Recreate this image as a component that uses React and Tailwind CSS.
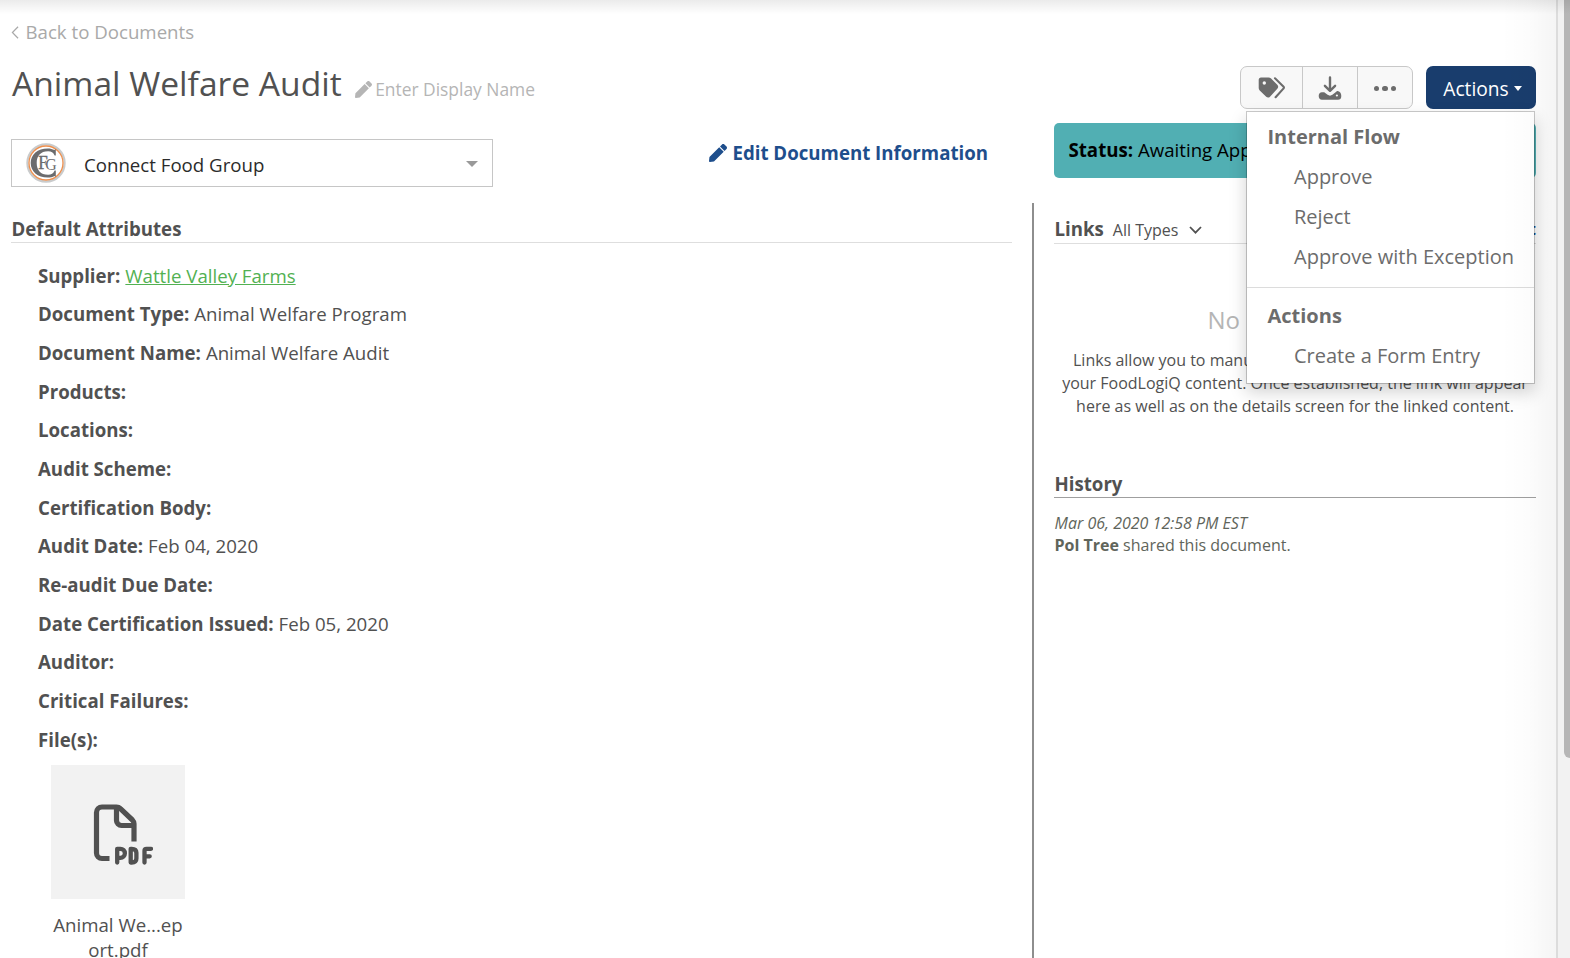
import React from "react";
import { FaPen } from "react-icons/fa";

const attributes = [
  ["Supplier:", "Wattle Valley Farms", true],
  ["Document Type:", "Animal Welfare Program"],
  ["Document Name:", "Animal Welfare Audit"],
  ["Products:"],
  ["Locations:"],
  ["Audit Scheme:"],
  ["Certification Body:"],
  ["Audit Date:", "Feb 04, 2020"],
  ["Re-audit Due Date:"],
  ["Date Certification Issued:", "Feb 05, 2020"],
  ["Auditor:"],
  ["Critical Failures:"],
  ["File(s):"],
];

function Tags() {
  return (
    <svg viewBox="0 0 28 22" className="h-[22px] w-[28px]">
      <path
        fill="currentColor"
        fillRule="evenodd"
        d="M3 .5h7.500c1 0 1.900.4 2.600 1l6.200 6.200c1.200 1.200 1.200 2.900 0 4.100l-7.300 7.900c-1.100 1.200-2.700 1.200-3.800.1L1.700 13.500C1 12.800.7 12 .7 11V3C.7 1.600 1.600.5 3 .5Zm3.300 3.800a1.700 1.700 0 1 0 0 3.400 1.700 1.700 0 0 0 0-3.400Z"
      />
      <path
        d="m17 1.300 8.600 8.400a1.200 1.200 0 0 1 0 1.700L17.600 20.200"
        fill="none"
        stroke="currentColor"
        strokeWidth="2.100"
        strokeLinecap="round"
      />
    </svg>
  );
}

function Download() {
  return (
    <svg viewBox="0 0 24 24" className="h-[24px] w-[24px]">
      <path d="M12 1.500v12M6.900 9.800l5.100 5 5.100-5" fill="none" stroke="currentColor" strokeWidth="2.400" strokeLinecap="round" strokeLinejoin="round" />
      <path
        fill="currentColor"
        fillRule="evenodd"
        d="M4 16.200h2.200l3.400 2.600c1.500 1.100 3.300 1.100 4.800 0l3.200-2.600 1.500-1.200c2.600-.2 4.200 2 4.200 4.900S22 23.700 20 23.700H4c-2 0-3.300-1.700-3.300-3.800S2 16.200 4 16.200Zm14.900 2.200a1.100 1.100 0 1 0 0 2.200 1.100 1.100 0 0 0 0-2.200Z"
      />
    </svg>
  );
}

function Logo() {
  return (
    <svg viewBox="0 0 40 40" className="h-[40px] w-[40px] shrink-0">
      <circle cx="20" cy="20" r="18.600" fill="#fff" stroke="#c9cbcc" strokeWidth="2.200" />
      <circle cx="20" cy="20" r="17" fill="#fff" stroke="#ee8f4d" strokeWidth="1.300" />
      <path d="M29.800 12.500V6l-1.300 1.100C26.500 6 24.300 5.500 21.800 5.500 11.500 5.500 4.700 11.500 4.700 20s6.800 14.500 17.100 14.500c2.500 0 4.700-.5 6.700-1.600l1.300 1.100v-6.500h-1.200c-1.200 3-3.300 4.300-6.500 4.300C14.400 31.800 10.700 27 10.700 20S14.400 8.200 22.100 8.200c3.200 0 5.300 1.300 6.500 4.300z" fill="#6b6c6e" />
      <text x="12.200" y="26" fontSize="18.500" textLength="9.500" lengthAdjust="spacingAndGlyphs" fill="#6b6c6e" stroke="#6b6c6e" strokeWidth=".4" className="font-['Liberation_Serif',serif]">F</text>
      <text x="19.300" y="27" fontSize="17" textLength="11.500" lengthAdjust="spacingAndGlyphs" fill="#6b6c6e" stroke="#fff" strokeWidth=".7" paintOrder="stroke" className="font-['Liberation_Serif',serif]">G</text>
    </svg>
  );
}

function PdfIcon() {
  return (
    <svg viewBox="0 0 60 62" className="h-[62px] w-[60px]" fill="none" stroke="#515151" strokeWidth="5.200" strokeLinejoin="round">
      <path d="M16.500 54.500H9a5.500 5.500 0 0 1-5.500-5.500V8.500A5.500 5.500 0 0 1 9 3h14.500c1.500 0 2.800.5 3.900 1.600L39.400 16c1 1 1.600 2.300 1.600 3.800V37.500" />
      <path d="M23.500 3v13.500a5 5 0 0 0 5 5H41" />
      <g strokeWidth="4.300" strokeLinecap="round">
        <path d="M24.200 58.500V44.800H27.400a4.500 4.500 0 0 1 0 9h-2" />
        <path d="M37.700 44.800v13.700h1c3.600 0 4.700-1.800 4.700-4V48.800c0-2.400-1.300-4-4.700-4z" />
        <path d="M51.500 58.500V46.800c0-1.300.7-2 2-2H58M52 52.300h4.700" />
      </g>
    </svg>
  );
}

function MenuItem({ children }) {
  return <div className="flex h-[40px] items-center pl-[47px] text-[20px]">{children}</div>;
}

function ActionsMenu() {
  return (
    <div className="absolute top-[45px] right-[1px] z-10 h-[273px] w-[289px] border border-black/20 bg-white bg-clip-padding pt-[4px] whitespace-nowrap text-[#6c6c6c] shadow-[0_8px_16px_rgba(0,0,0,0.18)]">
      <div className="flex h-[41px] items-center pl-[20.500px] text-[20px] font-bold">Internal Flow</div>
      <MenuItem>Approve</MenuItem>
      <MenuItem>Reject</MenuItem>
      <MenuItem>Approve with Exception</MenuItem>
      <div className="mt-[10px] h-px bg-[#dcdcdc]" />
      <div className="mt-[7px] flex h-[41px] items-center pl-[20.500px] text-[20px] font-bold">Actions</div>
      <MenuItem>Create a Form Entry</MenuItem>
    </div>
  );
}

export default function App() {
  return (
    <div className="relative flex h-[958px] w-[1570px] overflow-hidden bg-white font-['Open_Sans','Noto_Sans',sans-serif] text-[18.670px] text-[#515151]">
      <main className="flex w-[1556px] shrink-0 flex-col pl-[11px]">
        <div className="mt-[20px] flex h-[24px] items-center text-[#a9a9a9]">
          <svg viewBox="0 0 8 14" className="mr-[6.500px] h-[13px] w-[8px]" fill="none" stroke="currentColor" strokeWidth="1.300">
            <path d="M7.300.8 1.200 7l6.100 6.200" />
          </svg>
          <span>Back to Documents</span>
        </div>

        <header className="mt-[22px] flex h-[43px] w-[1525px] items-center justify-between">
          <div className="flex items-baseline pl-[1px] whitespace-nowrap">
            <h1 className="-mt-[9px] text-[33.600px] leading-[44px]">Animal Welfare Audit</h1>
            <span className="relative top-[2px] ml-[13.500px] flex items-center text-[17.400px] text-[#b5b5b5]">
              <FaPen className="mr-[3px] h-[17px] w-[17px]" />
              <span>Enter Display Name</span>
            </span>
          </div>
          <div className="relative flex h-[43px]">
            <div className="flex h-[43px] w-[173px] divide-x divide-[#c8c8c8] rounded-[7px] border border-[#c8c8c8] bg-[#f8f8f8] text-[#6c6c6c]">
              <div className="flex w-[62px] items-center justify-center"><Tags /></div>
              <div className="flex w-[55px] items-center justify-center"><Download /></div>
              <div className="flex flex-1 items-center justify-center gap-[3.300px] pt-[2px]">
                <i className="size-[5.300px] rounded-full bg-current" />
                <i className="size-[5.300px] rounded-full bg-current" />
                <i className="size-[5.300px] rounded-full bg-current" />
              </div>
            </div>
            <button className="ml-[13px] flex h-[43px] w-[110px] items-center justify-center gap-[5.500px] rounded-[7px] bg-[#193d6d] pl-[3.500px] text-[19.200px] text-white">
              <span className="mt-[4px]">Actions</span>
              <svg viewBox="0 0 8 5" className="mt-[1px] h-[5px] w-[8px]" fill="currentColor"><path d="M0 0h8L4 5z" /></svg>
            </button>
            <ActionsMenu />
          </div>
        </header>

        <section className="flex h-[94px] w-[1525px] shrink-0">
          <div className="mt-[30px] flex h-[48px] w-[482px] items-center border border-[#c6c6c6] pr-[14px] pl-[14px]">
            <Logo />
            <span className="mt-[4px] ml-[18px] flex-1 text-[#2b2b2b]">Connect Food Group</span>
            <svg viewBox="0 0 12 6" className="mt-px h-[6px] w-[12px]" fill="#999"><path d="M0 0h12L6 6z" /></svg>
          </div>
          <div className="mt-[32px] flex h-[24px] w-[495px] items-center justify-end font-bold text-[#1e4e8c]">
            <FaPen className="mr-[5px] h-[18px] w-[18px]" />
            <span>Edit Document Information</span>
          </div>
          <div className="mt-[14px] ml-[66px] flex h-[55px] w-[482px] items-center rounded-[5px] bg-[#51afb3] pb-[1px] pl-[14.500px] whitespace-pre text-black">
            <b>Status:</b> Awaiting Approval
          </div>
        </section>

        <section className="flex min-h-0 flex-1">
          <div className="w-[1001px]">
            <h2 className="flex h-[40px] items-start border-b border-[#dedede] pt-[13px] pl-[.5px] leading-[26px] font-bold">Default Attributes</h2>
            <div className="pt-[13.250px] pl-[27px]">
              {attributes.map(([label, value, link]) => (
                <div key={label} className="flex h-[38.690px] items-center gap-[5px]">
                  <b>{label}</b>
                  {link ? <a className="text-[#52b152] underline">{value}</a> : <span>{value}</span>}
                </div>
              ))}
              <div className="mt-[6px] ml-[13px] w-[134px]">
                <div className="flex h-[134px] items-center justify-center bg-[#f2f2f2] pt-[6px] pl-[10px]">
                  <PdfIcon />
                </div>
                <div className="mt-[13px] text-center leading-[25px]">
                  Animal We...ep
                  <br />
                  ort.pdf
                </div>
              </div>
            </div>
          </div>

          <aside className="ml-[20px] w-[504px] border-l-2 border-[#8e8e8e] pl-[20px]">
            <div className="flex h-[41px] items-center border-b border-[#dedede] pt-[12px] pl-[.5px]">
              <h2 className="font-bold">Links</h2>
              <span className="mt-px ml-[9px] text-[16px]">All Types</span>
              <svg viewBox="0 0 13 8" className="mt-[2px] ml-[11px] h-[8px] w-[13px]" fill="none" stroke="currentColor" strokeWidth="1.800"><path d="m1 1 5.500 5.700L12 1" /></svg>
              <span className="ml-auto text-[16px] font-bold text-[#1e4e8c]">Link Content</span>
            </div>
            <div className="mt-[59px] text-center text-[24px] leading-[34px] text-[#b5b5b5]">No Links Added</div>
            <p className="mt-[12px] text-center text-[16px] leading-[23px] whitespace-nowrap">
              <span className="pr-[5px]">Links allow you to manually establish connections between</span>
              <br />
              your FoodLogiQ content. Once established, the link will appear
              <br />
              here as well as on the details screen for the linked content.
            </p>
            <h2 className="mt-[52px] flex h-[28px] items-center border-b border-[#9f9f9f] pl-[.5px] font-bold">History</h2>
            <div className="mt-[14px] pl-[.5px] text-[16px] leading-[22px] text-[#5f655b]">
              <div className="italic">Mar 06, 2020 12:58 PM EST</div>
              <div><b>Pol Tree</b> shared this document.</div>
            </div>
          </aside>
        </section>
      </main>
      <div className="flex flex-1 justify-end border-l-2 border-[#dcdcdc] bg-[#f2f2f2]">
        <div className="h-[758px] w-[6px] rounded-bl-[6px] bg-[#b6b6b6]" />
      </div>
      <div className="pointer-events-none absolute top-0 left-0 z-20 h-[14px] w-[1570px] bg-linear-to-b from-black/8 to-transparent" />
      <div className="pointer-events-none absolute top-0 left-[1500px] z-20 h-[958px] w-[56px] bg-linear-to-r from-transparent via-black/[0.012] to-black/[0.04]" />
    </div>
  );
}
